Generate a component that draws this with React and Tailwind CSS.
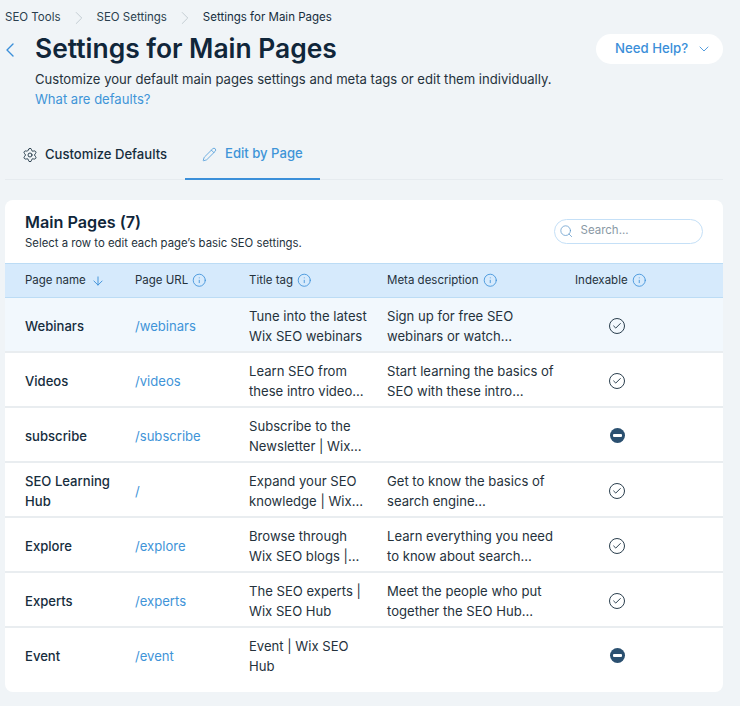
import React from "react";
import { ChevronLeft, ChevronRight, ChevronDown, Settings, Pencil, Search, ArrowDown, Info, Check } from "lucide-react";

const rows = [
  { name: ["Webinars"], url: "/webinars", title: ["Tune into the latest", "Wix SEO webinars"], meta: ["Sign up for free SEO", "webinars or watch…"], on: true, hi: true },
  { name: ["Videos"], url: "/videos", title: ["Learn SEO from", "these intro video…"], meta: ["Start learning the basics of", "SEO with these intro…"], on: true },
  { name: ["subscribe"], url: "/subscribe", title: ["Subscribe to the", "Newsletter | Wix…"], meta: [], on: false },
  { name: ["SEO Learning", "Hub"], url: "/", title: ["Expand your SEO", "knowledge | Wix…"], meta: ["Get to know the basics of", "search engine…"], on: true },
  { name: ["Explore"], url: "/explore", title: ["Browse through", "Wix SEO blogs |…"], meta: ["Learn everything you need", "to know about search…"], on: true },
  { name: ["Experts"], url: "/experts", title: ["The SEO experts |", "Wix SEO Hub"], meta: ["Meet the people who put", "together the SEO Hub…"], on: true },
  { name: ["Event"], url: "/event", title: ["Event | Wix SEO", "Hub"], meta: [], on: false },
];

const Lines = ({ lines }) => (
  <div className="flex flex-col">
    {lines.map((l) => (
      <span key={l} className="whitespace-nowrap">{l}</span>
    ))}
  </div>
);

const HeadCell = ({ children }) => (
  <div className="flex items-center gap-[4px]">
    <span>{children}</span>
    <Info className="w-[14.5px] h-[14.5px] text-[#3b8fd9]" strokeWidth={1.4} />
  </div>
);

export default function App() {
  return (
    <div className="w-[740px] h-[706px] overflow-hidden bg-[#f0f4f7] text-[#162d3d] font-['Inter','Liberation_Sans',sans-serif] flex flex-col pl-[5px] pr-[17px]">
      <nav className="flex items-center h-[17px] mt-[9px] text-[11.5px] text-[#2b3f4e]">
        <span>SEO Tools</span>
        <ChevronRight className="w-[22px] h-[22px] mx-[7px] -my-[3px] text-[#b4bec6]" strokeWidth={0.8} />
        <span>SEO Settings</span>
        <ChevronRight className="w-[22px] h-[22px] mx-[7px] -my-[3px] text-[#b4bec6]" strokeWidth={0.8} />
        <span className="text-[#162d3d]">Settings for Main Pages</span>
      </nav>

      <header className="flex items-start mt-[6px] h-[100px]">
        <ChevronLeft className="w-[24px] h-[24px] mt-[6px] text-[#3b8fd9] -ml-[7px] mr-[13px] shrink-0" strokeWidth={1.4} />
        <div className="flex-1 min-w-0">
          <h1 className="text-[26.4px] leading-[32px] font-semibold text-[#10263a]">Settings for Main Pages</h1>
          <p className="mt-[5px] text-[13.08px] leading-[20px] text-[#25323c]">Customize your default main pages settings and meta tags or edit them individually.</p>
          <p className="text-[13.05px] leading-[20px] text-[#3f94d8]">What are defaults?</p>
        </div>
        <button className="w-[127px] h-[30px] mt-[2px] pl-[19px] rounded-full bg-white text-[#3b8fd9] text-[13.2px] font-medium flex items-center gap-[8px] shrink-0">
          Need Help?
          <ChevronDown className="w-[16px] h-[16px]" strokeWidth={1.3} />
        </button>
      </header>

      <div className="flex items-stretch h-[48px] border-b border-[#e6ebef] text-[13.1px] w-[718px] shrink-0">
        <div className="flex items-center gap-[7px] pl-[17px] pb-[2px] w-[180px] text-[#162d3d] font-medium">
          <Settings className="w-[16px] h-[16px]" strokeWidth={1.3} />
          Customize Defaults
        </div>
        <div className="flex items-center gap-[8px] pl-[17px] pb-[2px] w-[135px] text-[#3f94d8] font-medium border-b-[2px] border-[#3b8fd9] -mb-px">
          <Pencil className="w-[15px] h-[15px]" strokeWidth={1.2} />
          Edit by Page
        </div>
      </div>

      <section className="mt-[20px] pb-[9px] rounded-[8px] bg-white overflow-hidden w-[718px] shrink-0">
        <div className="flex items-center justify-between h-[63px] pl-[20px] pr-[20px]">
          <div>
            <h2 className="text-[16.2px] leading-[20px] font-semibold text-[#10263a] -mt-[1px]">Main Pages (7)</h2>
            <p className="text-[11.35px] leading-[16px] mt-[3px] text-[#25323c]">Select a row to edit each page’s basic SEO settings.</p>
          </div>
          <div className="flex items-center gap-[7px] w-[149px] h-[25px] rounded-full border border-[#c5e0f7] pl-[4px] text-[11.5px] text-[#8a99a5] -mt-[1px]">
            <Search className="w-[14.5px] h-[14.5px] text-[#5a94c8]" strokeWidth={1.2} />
            Search...
          </div>
        </div>

        <div className="grid grid-cols-[110px_114px_138px_188px_1fr] items-center h-[35px] pl-[20px] bg-[#d6eafc] border-y border-[#bcdcf5] text-[11.5px] text-[#25323c]">
          <div className="flex items-center gap-[5px]">
            <span>Page name</span>
            <ArrowDown className="w-[14px] h-[14px] text-[#3b8fd9]" strokeWidth={1.6} />
          </div>
          <HeadCell>Page URL</HeadCell>
          <HeadCell>Title tag</HeadCell>
          <HeadCell>Meta description</HeadCell>
          <HeadCell>Indexable</HeadCell>
        </div>

        {rows.map((r, i) => (
          <div
            key={r.url}
            className={`grid grid-cols-[110px_114px_138px_188px_1fr] items-center h-[55px] pl-[20px] text-[13.1px] leading-[20px] text-[#25323c] ${r.hi ? "bg-[#f2f8fd]" : ""} ${i < rows.length - 1 ? "border-b-[2px] border-[#e9edf0] pt-[2px]" : ""}`}
          >
            <div className="text-[#162d3d] font-medium"><Lines lines={r.name} /></div>
            <div className="text-[#3f94d8]">{r.url}</div>
            <Lines lines={r.title} />
            <Lines lines={r.meta} />
            <div className="flex justify-center w-[84px]">
              {r.on ? (
                <span className="w-[16px] h-[16px] rounded-full border border-[#2b3f4e] flex items-center justify-center">
                  <Check className="w-[10px] h-[10px] text-[#162d3d]" strokeWidth={2.2} />
                </span>
              ) : (
                <span className="w-[15px] h-[15px] rounded-full bg-[#2b5070] flex items-center justify-center">
                  <span className="w-[9px] h-[2.5px] rounded-[1px] bg-white" />
                </span>
              )}
            </div>
          </div>
        ))}
      </section>
    </div>
  );
}
